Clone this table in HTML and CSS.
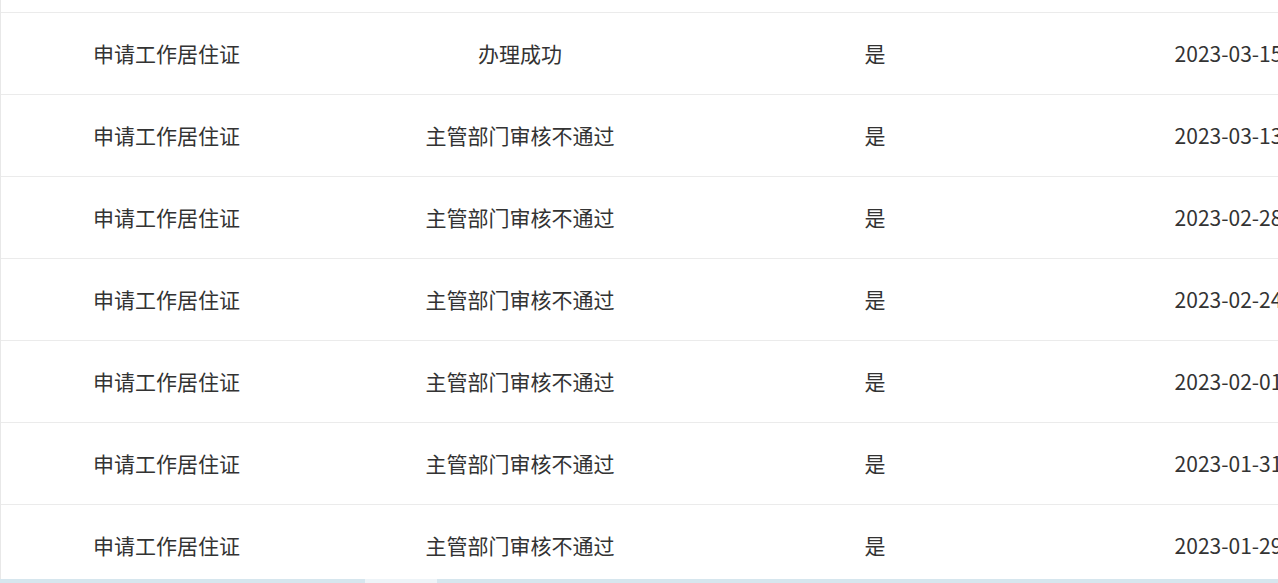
FILE: index.html
```html
<!DOCTYPE html>
<html lang="zh">
<head>
<meta charset="utf-8">
<link rel="stylesheet" href="styles.css">
</head>
<body>
<div class="table">
  <div class="row prev"></div>
  <div class="row"><div class="c c1">申请工作居住证</div><div class="c c2">办理成功</div><div class="c c3">是</div><div class="c c4">2023-03-15</div></div>
  <div class="row"><div class="c c1">申请工作居住证</div><div class="c c2">主管部门审核不通过</div><div class="c c3">是</div><div class="c c4">2023-03-13</div></div>
  <div class="row"><div class="c c1">申请工作居住证</div><div class="c c2">主管部门审核不通过</div><div class="c c3">是</div><div class="c c4">2023-02-28</div></div>
  <div class="row"><div class="c c1">申请工作居住证</div><div class="c c2">主管部门审核不通过</div><div class="c c3">是</div><div class="c c4">2023-02-24</div></div>
  <div class="row"><div class="c c1">申请工作居住证</div><div class="c c2">主管部门审核不通过</div><div class="c c3">是</div><div class="c c4">2023-02-01</div></div>
  <div class="row"><div class="c c1">申请工作居住证</div><div class="c c2">主管部门审核不通过</div><div class="c c3">是</div><div class="c c4">2023-01-31</div></div>
  <div class="row"><div class="c c1">申请工作居住证</div><div class="c c2">主管部门审核不通过</div><div class="c c3">是</div><div class="c c4">2023-01-29</div></div>
</div>
<div class="scrollbar"><div class="seg a"></div><div class="seg gap"></div><div class="seg b"></div></div>
</body>
</html>
```
FILE: styles.css
```css
html, body {
  margin: 0;
  padding: 0;
  background: #ffffff;
  overflow: hidden;
  width: 1278px;
  height: 583px;
}
body {
  font-family: "Noto Sans CJK SC", "Noto Sans", sans-serif;
  color: #333333;
  position: relative;
}
.table {
  width: 1420px;
  border-left: 1px solid #e8e8e8;
  display: flex;
  flex-direction: column;
}
.row {
  display: grid;
  grid-template-columns: 331px 376px 334px 378px;
  height: 81px;
  border-bottom: 1px solid #ebebeb;
  align-items: center;
}
.row.prev {
  height: 12px;
}
.c {
  text-align: center;
  font-size: 21px;
  line-height: 28px;
  padding-bottom: 2px;
  white-space: nowrap;
  font-weight: 400;
}
.c4 {
  padding-right: 5px;
}
.scrollbar {
  position: absolute;
  left: 0;
  right: 0;
  bottom: 0;
  height: 4px;
  display: flex;
}
.seg.a { width: 365px; background: #d6e6ee; }
.seg.gap { width: 72px; background: #eef4f8; }
.seg.b { flex: 1; background: #d6e6ee; }
```
